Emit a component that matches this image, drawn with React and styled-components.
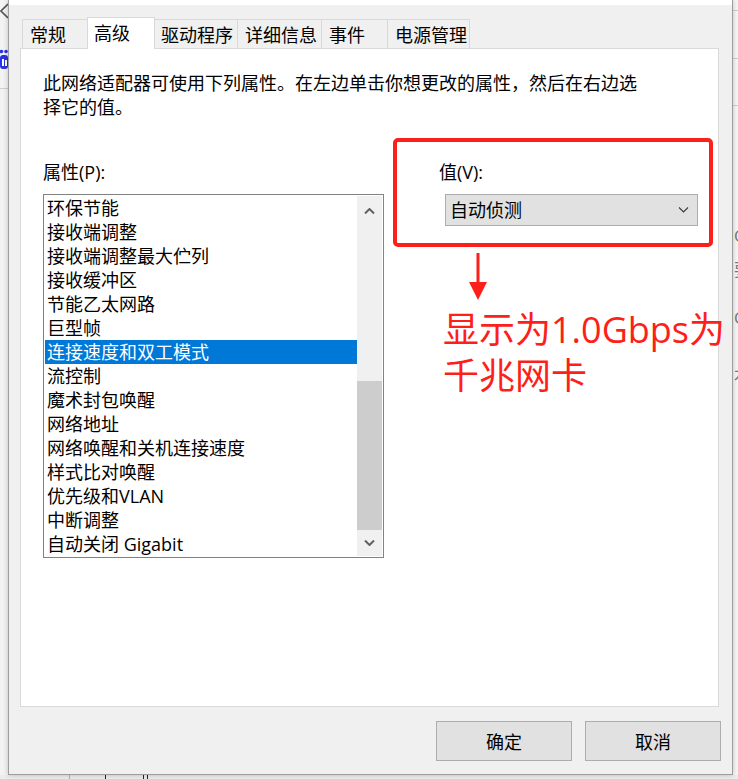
import React from "react"
import styled, { createGlobalStyle } from "styled-components"

const GlobalStyle = createGlobalStyle`
  html, body {
    margin: 0;
    padding: 0;
    background: #f2f2f2;
  }
  body {
    font-family: "Open Sans", "Noto Sans CJK SC", sans-serif;
    color: #000;
  }
  * {
    box-sizing: border-box;
  }
`

const tabs = [
  { label: "常规", width: 67 },
  { label: "高级", width: 68, active: true },
  { label: "驱动程序", width: 84 },
  { label: "详细信息", width: 84 },
  { label: "事件", width: 66 },
  { label: "电源管理", width: 83, last: true },
]

const properties = [
  "环保节能",
  "接收端调整",
  "接收端调整最大伫列",
  "接收缓冲区",
  "节能乙太网路",
  "巨型帧",
  "连接速度和双工模式",
  "流控制",
  "魔术封包唤醒",
  "网络地址",
  "网络唤醒和关机连接速度",
  "样式比对唤醒",
  "优先级和VLAN",
  "中断调整",
  "自动关闭 Gigabit",
]

const SELECTED = 6

const Chevron = ({ up, width = 11, height = 6, stroke = 2, color = "#606060" }) => (
  <svg width={width} height={height} viewBox="0 0 11 6">
    <polyline
      points={up ? "1,5.5 5.5,1 10,5.5" : "1,0.5 5.5,5 10,0.5"}
      fill="none"
      stroke={color}
      strokeWidth={stroke}
    />
  </svg>
)

const App = () => (
  <>
    <GlobalStyle />
    <Screen>
      <LeftStrip>
        <StripIcon $top={0}>
          <svg width="8" height="20" viewBox="0 0 8 20">
            <polyline points="8,4 1,11 8,18" fill="none" stroke="#555" strokeWidth="1.6" />
          </svg>
        </StripIcon>
        <StripIcon $top={29}>
          <svg width="8" height="22" viewBox="0 0 8 22">
            <circle cx="1.5" cy="2.5" r="1.8" fill="#2932e1" />
            <circle cx="6" cy="2.5" r="1.8" fill="#2932e1" />
            <rect x="0" y="6" width="8" height="14" rx="3" fill="#2932e1" />
            <rect x="2" y="10" width="2" height="7" fill="#fff" />
            <rect x="5" y="11" width="2" height="6" fill="#fff" />
          </svg>
        </StripIcon>
        <StripRule $top={17} />
      </LeftStrip>

      <Dialog>
        <TitleEdge />
        <Body>
          <TabStrip>
            {tabs.map((t) => (
              <Tab key={t.label} $width={t.width} $active={t.active} $last={t.last}>
                {t.label}
              </Tab>
            ))}
          </TabStrip>
          <Panel>
            <Description>
              此网络适配器可使用下列属性。在左边单击你想更改的属性，然后在右边选
              <br />
              择它的值。
            </Description>
            <Columns>
              <PropertyColumn>
                <FieldLabel>属性(P):</FieldLabel>
                <ListBox>
                  <Items>
                    {properties.map((p, i) => (
                      <Item key={p} $selected={i === SELECTED}>
                        {p}
                      </Item>
                    ))}
                  </Items>
                  <ScrollBar>
                    <ScrollButton $height={30}>
                      <Chevron up />
                    </ScrollButton>
                    <Track $height={155} />
                    <Thumb $height={149} />
                    <ScrollButton $height={26}>
                      <Chevron />
                    </ScrollButton>
                  </ScrollBar>
                </ListBox>
              </PropertyColumn>
              <ValueColumn>
                <FieldLabel>值(V):</FieldLabel>
                <Select>
                  <span>自动侦测</span>
                  <Chevron stroke={1.1} color="#3a3a3a" />
                </Select>
              </ValueColumn>
            </Columns>
          </Panel>
        </Body>
        <Footer>
          <Button>确定</Button>
          <Button>取消</Button>
        </Footer>
      </Dialog>

      <RightStrip>
        <StripRule $top={10} />
        <StripRule $top={47} />
        <StripRule $top={46} />
        <Fragment $top={120}>O</Fragment>
        <Fragment $top={14}>要</Fragment>
        <Fragment $top={28}>O</Fragment>
        <Fragment $top={38}>右</Fragment>
      </RightStrip>

      <BottomStrip>
        <Tick $left={69} $color="#b0b0b0" />
        <Tick $left={35} />
        <Tick $left={37} />
        <Tick $left={3} />
      </BottomStrip>

      <RedBox />
      <RedArrow width="20" height="48" viewBox="0 0 20 48">
        <rect x="8.5" y="0" width="3" height="32" fill="#fd1f1a" />
        <polygon points="1,29 19,29 10,47" fill="#fd1f1a" />
      </RedArrow>
      <RedNote>
        显示为1.0Gbps为
        <br />
        千兆网卡
      </RedNote>
    </Screen>
  </>
)

export default App

const Screen = styled.div`
  position: relative;
  width: 738px;
  height: 779px;
  overflow: hidden;
  display: grid;
  grid-template-columns: 8px 725px 5px;
  grid-template-rows: 775px 4px;
  background: #f2f2f2;
`

const LeftStrip = styled.div`
  display: flex;
  flex-direction: column;
  overflow: hidden;
  background: #f3f3f3;
`

const StripIcon = styled.div`
  flex-shrink: 0;
  display: flex;
  margin-top: ${(p) => p.$top}px;
`

const StripRule = styled.div`
  height: 1px;
  margin-top: ${(p) => p.$top}px;
  background: #cfcfcf;
  flex-shrink: 0;
`

const RightStrip = styled.div`
  display: flex;
  flex-direction: column;
  overflow: hidden;
  background: #f6f6f6;
`

const Fragment = styled.div`
  margin-top: ${(p) => p.$top}px;
  padding-left: 1px;
  font-size: 17px;
  line-height: 20px;
  color: #777;
  white-space: nowrap;
`

const BottomStrip = styled.div`
  grid-column: 1 / -1;
  display: flex;
  background: #ececec;
`

const Tick = styled.div`
  width: 1px;
  margin-left: ${(p) => p.$left}px;
  background: ${(p) => p.$color || "#222"};
`

const Dialog = styled.div`
  display: flex;
  flex-direction: column;
  background: #f0f0f0;
  border: 1px solid #9d9d9d;
  border-top: none;
  box-shadow: 0 0 5px rgba(0, 0, 0, 0.22);
  position: relative;
  z-index: 1;
`

const TitleEdge = styled.div`
  height: 5px;
  background: #fff;
`

const Body = styled.div`
  padding: 12px 13px 0 11px;
`

const TabStrip = styled.div`
  display: flex;
  align-items: flex-end;
  height: 31px;
  padding-left: 2px;
`

const Tab = styled.div`
  flex-shrink: 0;
  width: ${(p) => p.$width}px;
  height: ${(p) => (p.$active ? 32 : 29)}px;
  margin: ${(p) => (p.$active ? "0 -2px -1px" : "0")};
  padding: 3px 0 0 ${(p) => (p.$active ? 6 : 7)}px;
  font-size: 18px;
  line-height: 24px;
  white-space: nowrap;
  background: ${(p) => (p.$active ? "#fff" : "#f0f0f0")};
  border-top: 1px solid #d9d9d9;
  border-left: 1px solid #d9d9d9;
  border-right: ${(p) => (p.$active || p.$last ? "1px solid #d9d9d9" : "none")};
  position: relative;
  z-index: ${(p) => (p.$active ? 2 : 0)};
`

const Panel = styled.div`
  width: 699px;
  height: 659px;
  background: #fff;
  border: 1px solid #d9d9d9;
  padding: 22px 0 0 22px;
`

const Description = styled.div`
  font-size: 18px;
  line-height: 24px;
  white-space: nowrap;
`

const Columns = styled.div`
  display: flex;
  gap: 55px;
  margin-top: 41px;
`

const PropertyColumn = styled.div`
  width: 341px;
`

const ValueColumn = styled.div`
  display: flex;
  flex-direction: column;
`

const FieldLabel = styled.div`
  font-size: 18px;
  line-height: 24px;
  margin-bottom: 10px;
`

const ListBox = styled.div`
  display: flex;
  height: 364px;
  border: 1px solid #828282;
  padding: 1px;
`

const Items = styled.div`
  width: 312px;
  display: flex;
  flex-direction: column;
`

const Item = styled.div`
  height: 24px;
  padding-left: 2px;
  font-size: 18px;
  line-height: 24px;
  white-space: nowrap;
  color: ${(p) => (p.$selected ? "#fff" : "#000")};
  background: ${(p) => (p.$selected ? "#0078d7" : "transparent")};
`

const ScrollBar = styled.div`
  width: 25px;
  display: flex;
  flex-direction: column;
  background: #f0f0f0;
`

const ScrollButton = styled.div`
  height: ${(p) => p.$height}px;
  display: flex;
  align-items: center;
  justify-content: center;
`

const Track = styled.div`
  height: ${(p) => p.$height}px;
`

const Thumb = styled.div`
  height: ${(p) => p.$height}px;
  background: #cdcdcd;
`

const Select = styled.div`
  width: 253px;
  height: 32px;
  margin-left: 6px;
  display: flex;
  align-items: center;
  justify-content: space-between;
  padding: 0 8px 0 4px;
  background: #e1e1e1;
  border: 1px solid #adadad;
  font-size: 18px;
  line-height: 24px;
`

const Footer = styled.div`
  display: flex;
  justify-content: flex-end;
  gap: 13px;
  padding: 14px 11px 0 0;
`

const Button = styled.div`
  width: 136px;
  height: 40px;
  display: flex;
  align-items: center;
  justify-content: center;
  background: #e1e1e1;
  border: 1px solid #adadad;
  font-size: 18px;
`

const RedBox = styled.div`
  position: absolute;
  left: 393px;
  top: 138px;
  width: 320px;
  height: 109px;
  border: 4px solid #fd1f1a;
  border-radius: 5px;
  z-index: 5;
`

const RedArrow = styled.svg`
  position: absolute;
  left: 468px;
  top: 253px;
  z-index: 5;
`

const RedNote = styled.div`
  position: absolute;
  left: 443px;
  top: 307px;
  font-size: 36px;
  line-height: 46px;
  color: #fd1f1a;
  white-space: nowrap;
  z-index: 5;
`
